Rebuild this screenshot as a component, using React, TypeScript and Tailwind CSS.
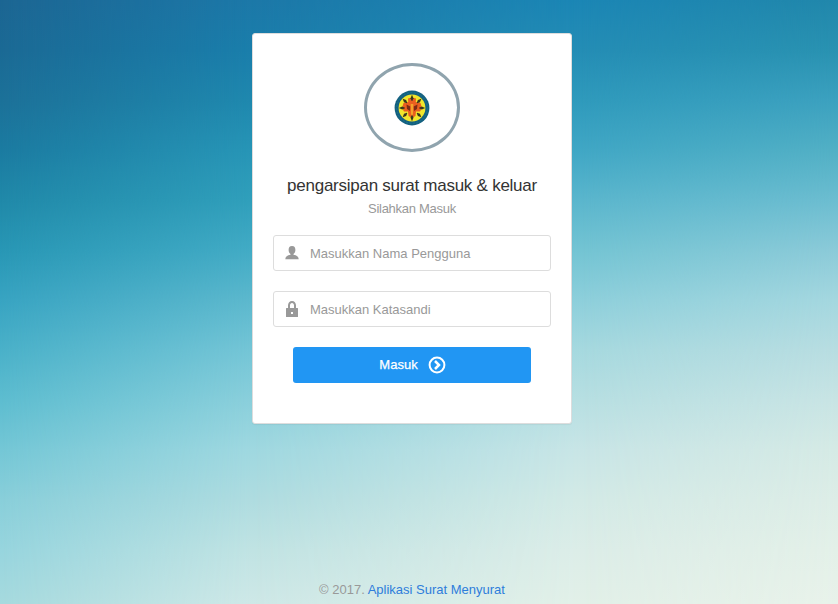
import React from "react";

function Emblem() {
  const spokes = [0, 45, 90, 135, 180, 225, 270, 315];
  return (
    <svg width="36" height="36" viewBox="0 0 36 36" aria-hidden="true">
      <circle cx="18" cy="18" r="17.4" fill="#14607f" />
      <circle cx="18" cy="18" r="15.3" fill="none" stroke="#1c7390" strokeWidth="1" strokeDasharray="2 1.5" />
      <circle cx="18" cy="18" r="13.4" fill="#f1e62c" />
      <path d="M14 8.5 Q18 7 22 8.500 L21.800 12 L26.500 13 L28 18 L26 21.500 L22 21.500 L21.500 26 L18 28 L14.500 26 L14 21.500 L10 21.500 L8 18 L9.500 13 L14.200 12 Z" fill="#ea5f20" />
      {spokes.map((a) => (
        <path key={a} d="M18 4.800 L19.500 8.200 L18.300 11 H17.700 L16.500 8.200 Z" fill="#38381c" transform={`rotate(${a} 18 18)`} />
      ))}
      <path d="M12.500 14.500 L16.300 16.500 L16 21 L13 19 Z M23.500 14.500 L19.700 16.500 L20 21 L23 19 Z" fill="#7c2a14" />
      <path d="M16.700 14 H19.300 L19 24 L18 26 L17 24 Z" fill="#f5a22a" />
    </svg>
  );
}

function UserIcon() {
  return (
    <svg width="16" height="16" viewBox="0 0 16 16" fill="#999" aria-hidden="true">
      <path d="M9.500 9.800V9.100c1.100-.7 1.900-2.200 1.900-4C11.400 2.600 10.500 1 8 1S4.600 2.600 4.600 5.100c0 1.800.8 3.300 1.900 4v.7c-3.200.4-5.200 2-5.200 4.400h13.400c0-2.400-2-4-5.200-4.400z" />
    </svg>
  );
}

function LockIcon() {
  return (
    <svg width="16" height="16" viewBox="0 0 16 16" fill="#999" aria-hidden="true">
      <path fillRule="evenodd" d="M13.500 7H12V4.300C12 2 10.400 0 8 0S4 2 4 4.300V7H2.500a.5.5 0 0 0-.5.5v8a.5.5 0 0 0 .5.5h11a.5.5 0 0 0 .5-.5v-8a.5.5 0 0 0-.5-.5zM6 4.300C6 3 6.800 2 8 2s2 1 2 2.300V7H6zM7 11h2v2H7z" />
    </svg>
  );
}

function ArrowIcon() {
  return (
    <svg width="18" height="18" viewBox="0 0 18 18" fill="none" stroke="#fff" strokeWidth="2" aria-hidden="true">
      <circle cx="9" cy="9" r="7.400" />
      <path d="M7 5 L11 9 L7 13" strokeWidth="2.500" />
    </svg>
  );
}

function Backdrop() {
  return (
    <div className="absolute inset-0 bg-[linear-gradient(180deg,#1c6693_0px,#1b6a95_50px,#1c7199_100px,#1b7ba1_150px,#2089a9_200px,#2897b5_250px,#38a4c2_300px,#4ab1c9_350px,#5dbdd0_400px,#74c7d6_450px,#89cfda_500px,#97d5de_550px,#a6dade_604px)]">
      <div className="absolute inset-0 bg-[linear-gradient(180deg,#1c78a8_0px,#1a7eab_50px,#1f88ae_100px,#2795b6_150px,#309fbb_200px,#42abc5_250px,#5cb8cd_300px,#74c5d6_350px,#8acfdb_400px,#9fd8e0_450px,#afdce0_500px,#c0e3e3_550px,#cee8e7_604px)] [mask-image:linear-gradient(90deg,transparent_0px,black_250px)]" />
      <div className="absolute inset-0 bg-[linear-gradient(180deg,#1b86b5_0px,#248db5_50px,#2f9abc_100px,#40a7c5_150px,#5ab6cd_200px,#73c4d3_250px,#8dcfdb_300px,#a6d9df_350px,#b7dfe2_400px,#c8e5e6_450px,#d3eae6_500px,#dcede8_550px,#e2f0e8_604px)] [mask-image:linear-gradient(90deg,transparent_250px,black_580px)]" />
      <div className="absolute inset-0 bg-[linear-gradient(180deg,#2187ab_0px,#2992b1_50px,#3ca1bf_100px,#52b0c5_150px,#6cbdd0_200px,#8bcad8_250px,#a4d7df_300px,#b8dde1_350px,#c8e4e4_400px,#d5eae5_450px,#ddede7_500px,#e3f0e8_550px,#e8f2ea_604px)] [mask-image:linear-gradient(90deg,transparent_580px,black_838px)]" />
    </div>
  );
}

function Field({ icon, label, type }: { icon: React.ReactNode; label: string; type: string }) {
  return (
    <label className="flex h-9 items-center gap-[10px] rounded-[3px] border border-[#ddd] bg-white pl-[10px]">
      {icon}
      <input
        type={type}
        placeholder={label}
        className="min-w-0 flex-1 bg-transparent pt-px text-[13px] leading-5 text-[#333] outline-none placeholder:text-[#999]"
      />
    </label>
  );
}

export default function App() {
  return (
    <div className="relative isolate h-[604px] w-[838px] overflow-hidden font-['Liberation_Sans',Arial,sans-serif] text-[13px] leading-5">
      <Backdrop />
      <div className="relative flex h-full flex-col items-center pr-[14px] pt-[33px]">
        <form className="flex h-[391px] w-80 flex-col rounded-[3px] border border-[#ddd] bg-white px-5 pt-[29px] shadow-[0_1px_1px_rgba(0,0,0,0.05)]">
          <div className="flex h-[89px] w-24 items-center justify-center self-center rounded-[50%] border-[3px] border-[#90a4ae]">
            <Emblem />
          </div>
          <h1 className="mt-[22px] text-center text-[17px] leading-6 tracking-[-0.255px] text-[#333]">pengarsipan surat masuk &amp; keluar</h1>
          <p className="mt-px text-center tracking-[-0.28px] text-[#999]">Silahkan Masuk</p>
          <div className="mt-4 flex flex-col gap-5">
            <Field icon={<UserIcon />} label="Masukkan Nama Pengguna" type="text" />
            <Field icon={<LockIcon />} label="Masukkan Katasandi" type="password" />
            <button type="button" className="mx-5 flex h-9 items-center justify-center gap-[10px] rounded-[3px] bg-[#2196f3] pl-px text-white">
              <span className="[-webkit-text-stroke:0.25px_white]">Masuk</span>
              <ArrowIcon />
            </button>
          </div>
        </form>
        <footer className="mt-auto mb-1 text-[#999]">
          © 2017. <a href="#" className="text-[#2e7ddb]">Aplikasi Surat Menyurat</a>
        </footer>
      </div>
    </div>
  );
}
